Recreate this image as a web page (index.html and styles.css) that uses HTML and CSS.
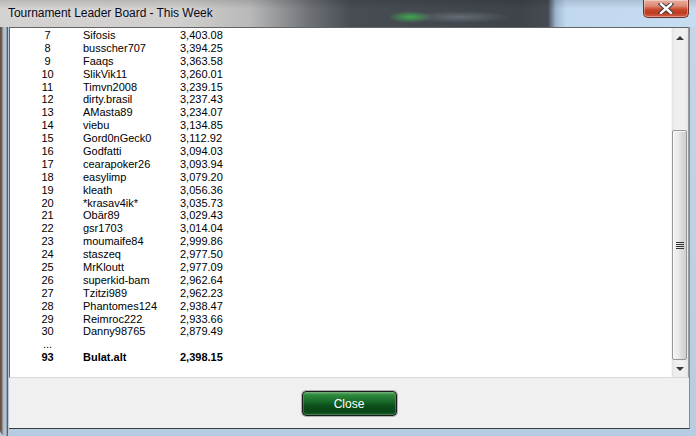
FILE: index.html
```html
<!DOCTYPE html>
<html>
<head>
<meta charset="utf-8">
<link rel="stylesheet" href="styles.css">
</head>
<body>
<div class="window">
  <div class="titlebar">
    <span class="title">Tournament Leader Board - This Week</span>
    <div class="caption-close">
      <svg width="16" height="11" viewBox="0 0 16 11">
        <path d="M3 1 L13 10 M13 1 L3 10" stroke="#3c3c3c" stroke-width="4.4" stroke-linecap="square" fill="none"/>
        <path d="M3 1 L13 10 M13 1 L3 10" stroke="#ffffff" stroke-width="2.4" stroke-linecap="square" fill="none"/>
      </svg>
    </div>
  </div>
  <div class="frame">
    <div class="client">
      <div class="listbox">
        <div class="rows">
          <div class="row"><span class="rank">7</span><span class="name">Sifosis</span><span class="score">3,403.08</span></div>
          <div class="row"><span class="rank">8</span><span class="name">busscher707</span><span class="score">3,394.25</span></div>
          <div class="row"><span class="rank">9</span><span class="name">Faaqs</span><span class="score">3,363.58</span></div>
          <div class="row"><span class="rank">10</span><span class="name">SlikVik11</span><span class="score">3,260.01</span></div>
          <div class="row"><span class="rank">11</span><span class="name">Timvn2008</span><span class="score">3,239.15</span></div>
          <div class="row"><span class="rank">12</span><span class="name">dirty.brasil</span><span class="score">3,237.43</span></div>
          <div class="row"><span class="rank">13</span><span class="name">AMasta89</span><span class="score">3,234.07</span></div>
          <div class="row"><span class="rank">14</span><span class="name">viebu</span><span class="score">3,134.85</span></div>
          <div class="row"><span class="rank">15</span><span class="name">Gord0nGeck0</span><span class="score">3,112.92</span></div>
          <div class="row"><span class="rank">16</span><span class="name">Godfatti</span><span class="score">3,094.03</span></div>
          <div class="row"><span class="rank">17</span><span class="name">cearapoker26</span><span class="score">3,093.94</span></div>
          <div class="row"><span class="rank">18</span><span class="name">easylimp</span><span class="score">3,079.20</span></div>
          <div class="row"><span class="rank">19</span><span class="name">kleath</span><span class="score">3,056.36</span></div>
          <div class="row"><span class="rank">20</span><span class="name">*krasav4ik*</span><span class="score">3,035.73</span></div>
          <div class="row"><span class="rank">21</span><span class="name">Obär89</span><span class="score">3,029.43</span></div>
          <div class="row"><span class="rank">22</span><span class="name">gsr1703</span><span class="score">3,014.04</span></div>
          <div class="row"><span class="rank">23</span><span class="name">moumaife84</span><span class="score">2,999.86</span></div>
          <div class="row"><span class="rank">24</span><span class="name">staszeq</span><span class="score">2,977.50</span></div>
          <div class="row"><span class="rank">25</span><span class="name">MrKloutt</span><span class="score">2,977.09</span></div>
          <div class="row"><span class="rank">26</span><span class="name">superkid-bam</span><span class="score">2,962.64</span></div>
          <div class="row"><span class="rank">27</span><span class="name">Tzitzi989</span><span class="score">2,962.23</span></div>
          <div class="row"><span class="rank">28</span><span class="name">Phantomes124</span><span class="score">2,938.47</span></div>
          <div class="row"><span class="rank">29</span><span class="name">Reimroc222</span><span class="score">2,933.66</span></div>
          <div class="row"><span class="rank">30</span><span class="name">Danny98765</span><span class="score">2,879.49</span></div>
          <div class="row"><span class="rank">...</span><span class="name"></span><span class="score"></span></div>
          <div class="row me"><span class="rank">93</span><span class="name">Bulat.alt</span><span class="score">2,398.15</span></div>
        </div>
        <div class="scrollbar">
          <div class="sb-btn"><span class="arrow-up"></span></div>
          <div class="sb-track">
            <div class="sb-thumb"><span class="grip"></span></div>
          </div>
          <div class="sb-btn"><span class="arrow-down"></span></div>
        </div>
      </div>
      <div class="footer">
        <button class="btn-close">Close</button>
      </div>
    </div>
  </div>
</div>
</body>
</html>
```
FILE: styles.css
```css
* { box-sizing: border-box; }
html, body { margin: 0; padding: 0; }
body {
  width: 696px;
  height: 436px;
  overflow: hidden;
  font-family: "Liberation Sans", Arial, sans-serif;
  background: #b9cde2;
}
.window {
  width: 696px;
  height: 436px;
  display: flex;
  flex-direction: column;
  position: relative;
}
.titlebar {
  height: 27px;
  flex: none;
  display: flex;
  align-items: center;
  padding-left: 8px;
  padding-bottom: 1px;
  background:
    radial-gradient(ellipse 22px 6px at 410px 17px, rgba(60,200,80,0.75), rgba(60,200,80,0) 100%),
    radial-gradient(ellipse 50px 6px at 460px 17px, rgba(140,150,160,0.45), rgba(140,150,160,0) 100%),
    linear-gradient(to bottom, rgba(0,0,0,0.12) 0, rgba(0,0,0,0) 9px),
    linear-gradient(to right, #d3d2d0 0, #d0cfcd 180px, #b9b9b9 250px, #6d7176 310px, #484d54 350px, #3f444b 520px, #464b52 548px, #9fb8d2 556px, #c1d8ef 566px, #c6dcf1 100%);
}
.title {
  font-size: 12px;
  color: #0a0a1a;
  text-shadow: 0 0 6px rgba(255,255,255,0.6);
  letter-spacing: -0.05px;
}
.caption-close {
  position: absolute;
  top: 0;
  right: 7px;
  width: 46px;
  height: 18px;
  border: 1px solid #6b3328;
  border-top: none;
  border-radius: 0 0 5px 5px;
  background: linear-gradient(to bottom, #e9b0a2 0, #dc8a76 35%, #c94a30 55%, #c2391f 75%, #d0604a 100%);
  box-shadow: inset 0 0 0 1px rgba(255,255,255,0.35);
  display: flex;
  align-items: center;
  justify-content: center;
}
.caption-close svg { display: block; margin-top: -1px; }
.frame {
  flex: 1;
  display: flex;
  padding: 0 7px 7px 9px;
  background:
    linear-gradient(to right, #5b4a3c 0, #7a6a5a 2px, #aab6c2 3px, #b7c7d8 6px, #3a3a3a 8px, #b7c7d8 8px) left top / 9px 100% no-repeat,
    linear-gradient(to bottom, #c3d6ea, #b6cce3);
  border-bottom-left-radius: 6px;
  border-bottom-right-radius: 6px;
}
.client {
  flex: 1;
  display: flex;
  flex-direction: column;
  border-bottom: 1px solid #3c3c3c;
  border-right: 1px solid #7d8a98;
  margin-right: -1px;
}
.listbox {
  height: 351px;
  flex: none;
  display: flex;
  background: #ffffff;
  border-style: solid;
  border-width: 1px;
  border-color: #646464 #9a9a9a #dadada #646464;
}
.rows {
  flex: 1;
  padding-top: 1px;
  font-size: 11px;
  color: #000;
}
.row {
  display: grid;
  grid-template-columns: 73px 97px 1fr;
  height: 12.9px;
  line-height: 12.9px;
  white-space: nowrap;
}
.rank {
  padding-left: 2px;
  text-align: center;
}
.row.me { font-weight: bold; }
.scrollbar {
  width: 17px;
  flex: none;
  display: flex;
  flex-direction: column;
  background: linear-gradient(to right, #e3e3e3 0, #eeeeee 3px, #f0f0f0 12px, #e6e6e6 100%);
  border-left: 1px solid #f4f4f4;
}
.sb-btn {
  height: 17px;
  flex: none;
  display: flex;
  align-items: center;
  justify-content: center;
}
.arrow-up {
  width: 0; height: 0;
  border-left: 4px solid transparent;
  border-right: 4px solid transparent;
  border-bottom: 4px solid #3a3a3a;
  margin-top: 3px;
}
.arrow-down {
  width: 0; height: 0;
  border-left: 4px solid transparent;
  border-right: 4px solid transparent;
  border-top: 4px solid #3a3a3a;
  margin-top: 1px;
}
.sb-track {
  flex: 1;
  display: flex;
  flex-direction: column;
  justify-content: flex-end;
  padding: 0 1px 0 0;
}
.sb-thumb {
  height: 230px;
  margin-bottom: 0;
  border: 1px solid #979797;
  border-radius: 2px;
  background: linear-gradient(to right, #f3f3f3 0, #ebebeb 40%, #d9d9d9 70%, #cfcfcf 100%);
  box-shadow: inset 1px 1px 0 #fbfbfb;
  display: flex;
  align-items: center;
  justify-content: center;
}
.grip {
  width: 8px;
  height: 7px;
  background: repeating-linear-gradient(to bottom, #333 0, #333 1px, transparent 1px, transparent 2px);
}
.footer {
  flex: 1;
  background: #f0f0f0;
  display: flex;
  justify-content: center;
  align-items: flex-start;
  padding-top: 13px;
}
.btn-close {
  width: 95px;
  height: 25px;
  border: 1px solid #1b1b1b;
  border-radius: 4px;
  background: linear-gradient(to bottom, #79b882 0, #2f8a3d 12%, #1a6c2a 40%, #0b4f1a 60%, #0a4517 85%, #16602a 100%);
  box-shadow: 0 0 0 1px #b0b0b0, inset 0 0 0 1px rgba(120,160,120,0.45);
  color: #ffffff;
  font-family: "Liberation Sans", Arial, sans-serif;
  font-size: 12px;
  padding: 0;
}
```
